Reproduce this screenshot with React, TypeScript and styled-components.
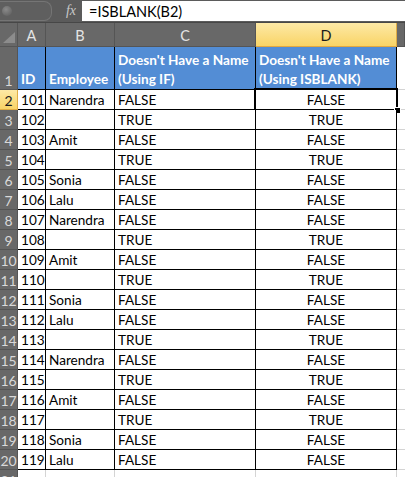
import React from "react";
import styled, { createGlobalStyle } from "styled-components";

const GlobalStyle = createGlobalStyle`
  html, body {
    margin: 0;
    padding: 0;
    background: #ffffff;
  }
  body {
    font-family: Lato, "Liberation Sans", sans-serif;
    overflow: hidden;
  }
`;

interface RowData {
    id: number;
    name: string;
}

const rows: RowData[] = [
    { id: 101, name: "Narendra" },
    { id: 102, name: "" },
    { id: 103, name: "Amit" },
    { id: 104, name: "" },
    { id: 105, name: "Sonia" },
    { id: 106, name: "Lalu" },
    { id: 107, name: "Narendra" },
    { id: 108, name: "" },
    { id: 109, name: "Amit" },
    { id: 110, name: "" },
    { id: 111, name: "Sonia" },
    { id: 112, name: "Lalu" },
    { id: 113, name: "" },
    { id: 114, name: "Narendra" },
    { id: 115, name: "" },
    { id: 116, name: "Amit" },
    { id: 117, name: "" },
    { id: 118, name: "Sonia" },
    { id: 119, name: "Lalu" }
];

const columnLetters = ["A", "B", "C", "D"];
const selectedColumn = "D";

export default function App(): React.ReactElement {
    return (
        <>
            <GlobalStyle />
            <Window>
                <FormulaBar>
                    <NameBoxEdge>
                        <ScrollKnob />
                    </NameBoxEdge>
                    <FxLabel>fx</FxLabel>
                    <FormulaInput>=ISBLANK(B2)</FormulaInput>
                </FormulaBar>

                <Sheet>
                    {/* column headers */}
                    <Corner>
                        <svg width="12" height="11" viewBox="0 0 12 11">
                            <polygon points="12,0 12,11 0,11" fill="#8c8c8c" />
                        </svg>
                    </Corner>
                    {columnLetters.map((letter) => (
                        <ColHeader key={letter} $selected={letter === selectedColumn}>
                            {letter}
                        </ColHeader>
                    ))}
                    <ColHeader $selected={false} />

                    {/* header row */}
                    <RowHeader $selected={false}>1</RowHeader>
                    <HeadCell>ID</HeadCell>
                    <HeadCell>Employee</HeadCell>
                    <HeadCell>
                        Doesn't Have a Name
                        <br />
                        (Using IF)
                    </HeadCell>
                    <HeadCell>
                        Doesn't Have a Name
                        <br />
                        (Using ISBLANK)
                    </HeadCell>
                    <EmptyCell />

                    {rows.map((row, i) => {
                        const blank = row.name === "";
                        const rowNum = i + 2;
                        return (
                            <React.Fragment key={row.id}>
                                <RowHeader $selected={rowNum === 2}>{rowNum}</RowHeader>
                                <Cell>{row.id}</Cell>
                                <Cell>{row.name}</Cell>
                                <Cell>{blank ? "TRUE" : "FALSE"}</Cell>
                                <Cell $center>
                                    {blank ? "TRUE" : "FALSE"}
                                    {rowNum === 2 && (
                                        <Selection>
                                            <FillHandle />
                                        </Selection>
                                    )}
                                </Cell>
                                <EmptyCell />
                            </React.Fragment>
                        );
                    })}

                    <RowHeader $selected={false}>21</RowHeader>
                    <BlankCell />
                    <BlankCell />
                    <BlankCell />
                    <BlankCell />
                    <EmptyCell />
                </Sheet>
            </Window>
        </>
    );
}

const Window = styled.div`
    width: 405px;
    height: 477px;
    overflow: hidden;
    background: #ffffff;
`;

const FormulaBar = styled.div`
    height: 23px;
    box-sizing: border-box;
    display: flex;
    align-items: stretch;
    padding: 1px 0 1px 0;
    background: #5b5b5b;
    border-bottom: 1px solid #474747;
`;

const NameBoxEdge = styled.div`
    box-sizing: border-box;
    width: 56px;
    margin-left: -4px;
    border: 1px solid #757575;
    border-left: none;
    border-radius: 0 8px 8px 0;
    background: #5f5f5f;
    display: flex;
    align-items: center;
    padding-left: 6px;
`;

const ScrollKnob = styled.div`
    width: 10px;
    height: 10px;
    border-radius: 50%;
    background: radial-gradient(circle at 40% 35%, #8a8a8a, #5a5a5a);
`;

const FxLabel = styled.div`
    box-sizing: border-box;
    width: 29px;
    font-family: "Liberation Serif", "DejaVu Serif", serif;
    font-style: italic;
    font-size: 14px;
    color: #c8c8c8;
    display: flex;
    align-items: center;
    justify-content: flex-end;
    padding-right: 5px;
`;

const FormulaInput = styled.div`
    flex: 1;
    margin-left: 1px;
    background: #ffffff;
    color: #000000;
    font-size: 14.5px;
    display: flex;
    align-items: center;
    padding-left: 7px;
`;

const Sheet = styled.div`
    display: grid;
    grid-template-columns: 18px 28px 69px 141px 141px 1fr;
    grid-template-rows: 24px 43px repeat(20, 20px);
    font-size: 13.6px;
`;

const Corner = styled.div`
    background: #686868;
    border-right: 1px solid #555555;
    border-bottom: 1px solid #555555;
    display: flex;
    align-items: flex-end;
    justify-content: flex-end;
    padding: 0 2px 3px 0;
`;

const ColHeader = styled.div<{ $selected: boolean }>`
    box-sizing: border-box;
    display: flex;
    align-items: center;
    justify-content: center;
    padding-top: 2px;
    font-size: 14.5px;
    color: ${(p) => (p.$selected ? "#1c1c1c" : "#e4e4e4")};
    background: ${(p) => (p.$selected ? "linear-gradient(#fde9a6, #f9d466)" : "#686868")};
    border-right: 1px solid ${(p) => (p.$selected ? "#e0ad45" : "#555555")};
    border-bottom: 1px solid ${(p) => (p.$selected ? "#e2a840" : "#555555")};
`;

const RowHeader = styled.div<{ $selected: boolean }>`
    box-sizing: border-box;
    display: flex;
    align-items: flex-end;
    justify-content: center;
    font-size: 14px;
    line-height: 17px;
    overflow: visible;
    white-space: nowrap;
    color: ${(p) => (p.$selected ? "#1c1c1c" : "#d9d9d9")};
    background: ${(p) => (p.$selected ? "linear-gradient(#fde9a6, #f9d466)" : "#686868")};
    border-right: 1px solid ${(p) => (p.$selected ? "#e0ad45" : "#555555")};
    border-bottom: 1px solid ${(p) => (p.$selected ? "#e0ad45" : "#555555")};
`;

const HeadCell = styled.div`
    box-sizing: border-box;
    display: flex;
    flex-direction: column;
    justify-content: flex-end;
    padding: 0 3px 0 3px;
    background: #538dd5;
    color: #ffffff;
    font-weight: 700;
    line-height: 19px;
    white-space: nowrap;
    border-right: 1px solid #000000;
    border-bottom: 1px solid #000000;
`;

const Cell = styled.div<{ $center?: boolean }>`
    position: relative;
    box-sizing: border-box;
    display: flex;
    align-items: flex-end;
    justify-content: ${(p) => (p.$center ? "center" : "flex-start")};
    padding: 0 3px 0 3px;
    line-height: 17px;
    white-space: nowrap;
    color: #000000;
    background: #ffffff;
    border-right: 1px solid #000000;
    border-bottom: 1px solid #000000;
`;

const EmptyCell = styled.div`
    background: #ffffff;
    border-bottom: 1px solid #d4d4d4;
`;

const BlankCell = styled.div`
    background: #ffffff;
    border-right: 1px solid #d4d4d4;
`;

const Selection = styled.div`
    position: absolute;
    left: -2px;
    top: -2px;
    right: -2px;
    bottom: -2px;
    border: 2px solid #000000;
    box-shadow: inset 0 0 0 1px #ffffff;
    pointer-events: none;
`;

const FillHandle = styled.div`
    position: absolute;
    right: -5px;
    bottom: -5px;
    width: 5px;
    height: 5px;
    background: #000000;
    border: 1px solid #ffffff;
`;
